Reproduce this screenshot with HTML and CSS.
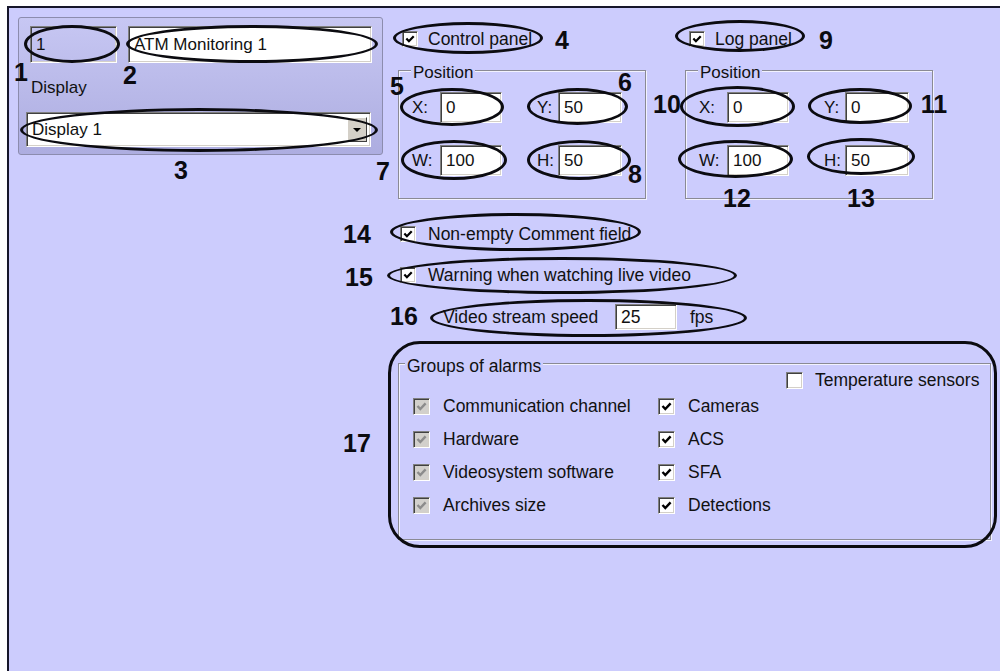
FILE: index.html
```html
<!DOCTYPE html>
<html lang="en">
<head>
  <meta charset="UTF-8">
  <meta name="viewport" content="width=device-width, initial-scale=1.0">
  <title>ATM Monitoring settings</title>
  <link rel="stylesheet" href="styles.css">
</head>
<body>
  <div class="screen">
    <div class="panel">
      <div class="panel-fields">
        <span class="field field-id">1</span>
        <span class="field field-name">ATM Monitoring 1</span>
      </div>
      <div class="panel-label">Display</div>
      <div class="field combo">
        <span>Display 1</span>
        <span class="combo-btn"><svg viewBox="0 0 10 6"><polygon points="1,1 9,1 5,5"/></svg></span>
      </div>
    </div>

    <div class="settings">
      <div class="panels">
        <div class="panel-col">
          <div class="check-row">
            <span class="cb"><svg viewBox="0 0 11 11"><path d="M1.5 5 4.3 8 9.6 2.4"/></svg></span>
            <span>Control panel</span>
          </div>
          <div class="group pos-group">
            <span class="group-title">Position</span>
            <div class="pos-row">
              <span class="pos-label">X:</span><span class="field pos-field">0</span>
              <span class="pos-label second">Y:</span><span class="field pos-field wide">50</span>
            </div>
            <div class="pos-row">
              <span class="pos-label">W:</span><span class="field pos-field">100</span>
              <span class="pos-label second">H:</span><span class="field pos-field wide">50</span>
            </div>
          </div>
        </div>
        <div class="panel-col">
          <div class="check-row">
            <span class="cb"><svg viewBox="0 0 11 11"><path d="M1.5 5 4.3 8 9.6 2.4"/></svg></span>
            <span>Log panel</span>
          </div>
          <div class="group pos-group">
            <span class="group-title">Position</span>
            <div class="pos-row">
              <span class="pos-label">X:</span><span class="field pos-field">0</span>
              <span class="pos-label second">Y:</span><span class="field pos-field wide">0</span>
            </div>
            <div class="pos-row">
              <span class="pos-label">W:</span><span class="field pos-field">100</span>
              <span class="pos-label second">H:</span><span class="field pos-field wide">50</span>
            </div>
          </div>
        </div>
      </div>

      <div class="check-row option first">
        <span class="cb"><svg viewBox="0 0 11 11"><path d="M1.5 5 4.3 8 9.6 2.4"/></svg></span>
        <span>Non-empty Comment field</span>
      </div>
      <div class="check-row option">
        <span class="cb"><svg viewBox="0 0 11 11"><path d="M1.5 5 4.3 8 9.6 2.4"/></svg></span>
        <span>Warning when watching live video</span>
      </div>
      <div class="speed">
        <span class="speed-label">Video stream speed</span>
        <span class="field speed-field">25</span>
        <span class="speed-unit">fps</span>
      </div>

      <div class="group alarms">
        <span class="group-title">Groups of alarms</span>
        <div class="temp-row">
          <span class="cb big"></span>
          <span>Temperature sensors</span>
        </div>
        <div class="alarm-grid">
          <div class="alarm"><span class="cb big dis"><svg viewBox="0 0 11 11"><path d="M1.5 5 4.3 8 9.6 2.4"/></svg></span>Communication channel</div>
          <div class="alarm"><span class="cb big"><svg viewBox="0 0 11 11"><path d="M1.5 5 4.3 8 9.6 2.4"/></svg></span>Cameras</div>
          <div class="alarm"><span class="cb big dis"><svg viewBox="0 0 11 11"><path d="M1.5 5 4.3 8 9.6 2.4"/></svg></span>Hardware</div>
          <div class="alarm"><span class="cb big"><svg viewBox="0 0 11 11"><path d="M1.5 5 4.3 8 9.6 2.4"/></svg></span>ACS</div>
          <div class="alarm"><span class="cb big dis"><svg viewBox="0 0 11 11"><path d="M1.5 5 4.3 8 9.6 2.4"/></svg></span>Videosystem software</div>
          <div class="alarm"><span class="cb big"><svg viewBox="0 0 11 11"><path d="M1.5 5 4.3 8 9.6 2.4"/></svg></span>SFA</div>
          <div class="alarm"><span class="cb big dis"><svg viewBox="0 0 11 11"><path d="M1.5 5 4.3 8 9.6 2.4"/></svg></span>Archives size</div>
          <div class="alarm"><span class="cb big"><svg viewBox="0 0 11 11"><path d="M1.5 5 4.3 8 9.6 2.4"/></svg></span>Detections</div>
        </div>
      </div>
    </div>
  </div>

  <!-- callout marks drawn over the screenshot -->
  <div class="marks">
    <span class="ring r1"></span>
    <span class="ring r2"></span>
    <span class="ring r3"></span>
    <span class="ring r4"></span>
    <span class="ring r5"></span>
    <span class="ring r6"></span>
    <span class="ring r7"></span>
    <span class="ring r8"></span>
    <span class="ring r9"></span>
    <span class="ring r10"></span>
    <span class="ring r11"></span>
    <span class="ring r12"></span>
    <span class="ring r13"></span>
    <span class="ring r14"></span>
    <span class="ring r15"></span>
    <span class="ring r16"></span>
    <span class="ring r17"></span>

    <span class="num n1">1</span>
    <span class="num n2">2</span>
    <span class="num n3">3</span>
    <span class="num n4">4</span>
    <span class="num n5">5</span>
    <span class="num n6">6</span>
    <span class="num n7">7</span>
    <span class="num n8">8</span>
    <span class="num n9">9</span>
    <span class="num n10">10</span>
    <span class="num n11">11</span>
    <span class="num n12">12</span>
    <span class="num n13">13</span>
    <span class="num n14">14</span>
    <span class="num n15">15</span>
    <span class="num n16">16</span>
    <span class="num n17">17</span>
  </div>
</body>
</html>
```

FILE: styles.css
```css
body {
  margin: 0;
  background: #fff;
  font-family: "Liberation Sans", Arial, sans-serif;
  color: #111;
  overflow: hidden;
}
.screen {
  margin: 6px 0 0 7px;
  height: 665px;
  box-sizing: border-box;
  border-top: 2px solid #16162a;
  border-left: 2px solid #16162a;
  background: #ccccfd;
  display: flex;
  align-items: flex-start;
}

/* sunken windows field */
.field {
  box-sizing: border-box;
  display: flex;
  align-items: center;
  padding-left: 5px;
  background: #fff;
  border: 1px solid;
  border-color: #808080 #fff #fff #808080;
  box-shadow: inset 1px 1px #404040, inset -1px -1px #d4d0c8;
}

.panel {
  margin: 9px 0 0 9px;
  width: 365px;
  height: 138px;
  box-sizing: border-box;
  border: 1px solid #8c8cae;
  border-radius: 3px;
  background: linear-gradient(#c7c7f3, #adade0);
  padding: 8px 0 0 11px;
  font-size: 17px;
}
.panel-fields {
  display: flex;
  gap: 11px;
}
.field-id {
  width: 87px;
  height: 37px;
  background: transparent;
}
.field-name {
  width: 244px;
  height: 37px;
}
.panel-label {
  margin: 15px 0 0 1px;
  line-height: 20px;
}
.combo {
  margin: 14px 0 0 -4px;
  width: 345px;
  height: 35px;
}
.combo-btn {
  margin-left: auto;
  margin-right: 3px;
  width: 20px;
  height: 25px;
  box-sizing: border-box;
  background: #d4d0c8;
  border: 1px solid;
  border-color: #fff #404040 #404040 #fff;
  display: flex;
  align-items: center;
  justify-content: center;
}
.combo-btn svg {
  width: 10px;
  height: 6px;
}

.settings {
  margin: 20px 0 0 15px;
  width: 593px;
  font-size: 17.5px;
}
.panels {
  display: flex;
  gap: 39px;
}
.panel-col {
  width: 248px;
}
.check-row {
  display: flex;
  align-items: center;
  height: 22px;
  gap: 10px;
  padding-left: 4px;
  white-space: nowrap;
}

/* checkbox */
.cb {
  width: 16px;
  height: 16px;
  flex: none;
  box-sizing: border-box;
  padding: 2px;
  background: #fff;
  border: 1px solid;
  border-color: #808080 #fff #fff #808080;
  box-shadow: inset 1px 1px #404040, inset -1px -1px #d4d0c8;
  display: inline-flex;
}
.cb svg {
  width: 100%;
  height: 100%;
  fill: none;
  stroke: #000;
  stroke-width: 2.4;
}
.cb.big {
  width: 17px;
  height: 17px;
}
.cb.dis {
  background: #d2d0cc;
}
.cb.dis svg {
  stroke: #8c8c8c;
}

/* etched group box */
.group {
  position: relative;
  box-sizing: border-box;
  border: 1px solid #8a8a94;
  box-shadow: inset 1px 1px #f2f2ff, 1px 1px #f2f2ff;
}
.group-title {
  position: absolute;
  top: -8px;
  left: 12px;
  padding: 0 2px;
  background: #ccccfd;
  line-height: 20px;
  font-size: 17px;
}
.pos-group {
  margin-top: 20px;
  height: 129px;
  padding: 21px 0 0 13px;
  font-size: 17px;
}
.pos-row {
  display: flex;
  align-items: center;
  height: 31px;
}
.pos-row + .pos-row {
  margin-top: 22px;
}
.pos-label {
  width: 28px;
}
.pos-label.second {
  margin-left: 35px;
  width: 21px;
}
.pos-field {
  width: 62px;
  height: 31px;
}
.pos-field.wide {
  width: 64px;
}

.option {
  height: 26px;
  gap: 12px;
  padding-left: 2px;
  margin-top: 15px;
}
.option.first {
  margin-top: 22px;
}
.speed {
  margin-top: 16px;
  padding-left: 45px;
  display: flex;
  align-items: center;
  height: 26px;
  white-space: nowrap;
}
.speed-label {
  width: 172px;
}
.speed-field {
  width: 62px;
  height: 26px;
}
.speed-unit {
  margin-left: 13px;
}

.alarms {
  margin-top: 33px;
  height: 177px;
  padding-top: 5px;
}
.alarms .group-title {
  left: 6px;
  font-size: 17.5px;
}
.temp-row {
  display: flex;
  align-items: center;
  gap: 12px;
  height: 22px;
  padding-left: 387px;
  white-space: nowrap;
}
.alarm-grid {
  margin-top: 4px;
  padding-left: 14px;
  display: grid;
  grid-template-columns: 245px 1fr;
  row-gap: 11px;
}
.alarm {
  display: flex;
  align-items: center;
  gap: 13px;
  height: 22px;
  white-space: nowrap;
}

/* callouts */
.marks {
  position: absolute;
  left: 0;
  top: 0;
  width: 1000px;
  height: 671px;
  pointer-events: none;
}
.ring {
  position: absolute;
  box-sizing: border-box;
  border: 3.5px solid #0b0b10;
  border-radius: 50%;
}
.r1 { left: 24px; top: 25px; width: 96px; height: 38px; }
.r2 { left: 126px; top: 25px; width: 252px; height: 38px; }
.r3 { left: 20px; top: 108px; width: 358px; height: 44px; }
.r4 { left: 393px; top: 22px; width: 150px; height: 32px; }
.r5 { left: 400px; top: 88px; width: 104px; height: 38px; }
.r6 { left: 527px; top: 88px; width: 101px; height: 37px; }
.r7 { left: 401px; top: 140px; width: 106px; height: 40px; }
.r8 { left: 527px; top: 140px; width: 104px; height: 40px; }
.r9 { left: 675px; top: 20px; width: 130px; height: 32px; }
.r10 { left: 680px; top: 86px; width: 115px; height: 41px; }
.r11 { left: 808px; top: 88px; width: 104px; height: 36px; }
.r12 { left: 678px; top: 140px; width: 115px; height: 38px; }
.r13 { left: 807px; top: 138px; width: 108px; height: 37px; }
.r14 { left: 390px; top: 213px; width: 251px; height: 38px; }
.r15 { left: 387px; top: 257px; width: 350px; height: 37px; }
.r16 { left: 430px; top: 299px; width: 317px; height: 38px; }
.r17 { left: 388px; top: 341px; width: 609px; height: 207px; border-radius: 32px; }

.num {
  position: absolute;
  font-size: 25px;
  font-weight: bold;
  line-height: 1;
  color: #0b0b10;
  transform: translate(-50%, -50%);
}
.n1 { left: 21px; top: 72px; }
.n2 { left: 130px; top: 75px; }
.n3 { left: 181px; top: 170px; }
.n4 { left: 562px; top: 40px; }
.n5 { left: 397px; top: 86px; }
.n6 { left: 625px; top: 82px; }
.n7 { left: 383px; top: 171px; }
.n8 { left: 635px; top: 174px; }
.n9 { left: 826px; top: 40px; }
.n10 { left: 667px; top: 104px; }
.n11 { left: 934px; top: 104px; }
.n12 { left: 737px; top: 198px; }
.n13 { left: 861px; top: 198px; }
.n14 { left: 357px; top: 234px; }
.n15 { left: 359px; top: 277px; }
.n16 { left: 404px; top: 316px; }
.n17 { left: 357px; top: 443px; }
```
